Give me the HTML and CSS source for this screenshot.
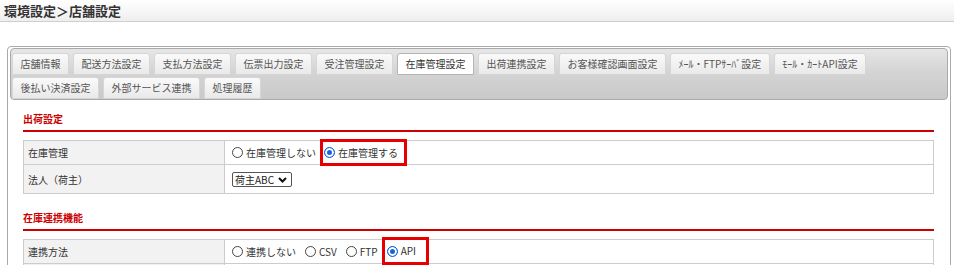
FILE: index.html
```html
<!DOCTYPE html>
<html lang="ja">
<head>
<meta charset="utf-8">
<title>店舗設定</title>
<link rel="stylesheet" href="styles.css">
</head>
<body>
<div class="titlebar"><h1>環境設定＞店舗設定</h1></div>
<div class="panel">
  <div class="tabs">
    <span class="tab">店舗情報</span>
    <span class="tab">配送方法設定</span>
    <span class="tab">支払方法設定</span>
    <span class="tab">伝票出力設定</span>
    <span class="tab">受注管理設定</span>
    <span class="tab active">在庫管理設定</span>
    <span class="tab">出荷連携設定</span>
    <span class="tab">お客様確認画面設定</span>
    <span class="tab">ﾒｰﾙ・FTPｻｰﾊﾞ設定</span>
    <span class="tab">ﾓｰﾙ・ｶｰﾄAPI設定</span>
    <span class="tab">後払い決済設定</span>
    <span class="tab">外部サービス連携</span>
    <span class="tab">処理履歴</span>
  </div>
  <div class="content">
    <h3 class="sec">出荷設定</h3>
    <table class="form">
      <tr class="row">
        <th>在庫管理</th>
        <td>
          <div class="opts">
            <label class="opt"><span class="radio"></span>在庫管理しない</label>
            <label class="opt hl"><span class="radio on"></span>在庫管理する</label>
          </div>
        </td>
      </tr>
      <tr class="row tall">
        <th>法人（荷主）</th>
        <td>
          <span class="sel">荷主ABC<svg class="chev" width="9" height="6" viewBox="0 0 9 6"><path d="M1 1 L4.5 4.5 L8 1" fill="none" stroke="#111" stroke-width="2"/></svg></span>
        </td>
      </tr>
    </table>

    <h3 class="sec sec2">在庫連携機能</h3>
    <table class="form">
      <tr class="row">
        <th>連携方法</th>
        <td>
          <div class="opts">
            <label class="opt"><span class="radio"></span>連携しない</label>
            <label class="opt"><span class="radio"></span>CSV</label>
            <label class="opt"><span class="radio"></span>FTP</label>
            <label class="opt hl hl2"><span class="radio on"></span>API</label>
          </div>
        </td>
      </tr>
      <tr class="row">
        <th>&nbsp;</th>
        <td>&nbsp;</td>
      </tr>
    </table>
  </div>
</div>
</body>
</html>
```

FILE: styles.css
```css
html, body {
  margin: 0;
  padding: 0;
  background: #fff;
}
body {
  font-family: "Noto Sans CJK JP", "Noto Sans", sans-serif;
  color: #333;
  overflow: hidden;
}
.titlebar {
  height: 21px;
  border-bottom: 1px solid #cfcfcf;
  background: linear-gradient(#ffffff, #eeeeee);
  padding-left: 4px;
}
.titlebar h1 {
  margin: 0;
  font-size: 13px;
  font-weight: bold;
  line-height: 21px;
  color: #333;
}
.panel {
  margin: 24px 3px 0 7px;
  border: 1px solid #aaa;
  border-radius: 4px;
  padding: 1px 2px 0;
  height: 260px;
}
.tabs {
  display: flex;
  flex-wrap: wrap;
  align-content: flex-start;
  row-gap: 2px;
  column-gap: 4px;
  border: 1px solid #aaa;
  border-radius: 4px;
  padding: 4px 2px 0 1px;
  background: linear-gradient(#e6e6e6, #d4d4d4 45%, #c9c9c9);
  box-sizing: border-box;
  height: 52px;
}
.tab {
  height: 22px;
  box-sizing: border-box;
  padding: 0 7.5px;
  font-size: 10px;
  line-height: 20px;
  color: #555;
  border: 1px solid #d6d6d6;
  border-radius: 3px 3px 0 0;
  background: linear-gradient(#fafafa, #e9e9e9);
  white-space: nowrap;
}
.tab.active {
  background: #fff;
  border-color: #b5b5b5;
  color: #333;
}
.content {
  margin: 0 14px 0 13px;
}
.sec {
  margin: 12px 0 0;
  font-size: 10px;
  line-height: 14px;
  font-weight: bold;
  color: #cc0000;
  padding-bottom: 4px;
  border-bottom: 2px solid #cc0000;
}
.sec2 {
  margin-top: 17px;
}
.form {
  width: 100%;
  margin-top: 8px;
  border-collapse: collapse;
  font-size: 10px;
}
.form th, .form td {
  border: 1px solid #ccc;
  padding: 0;
  height: 23px;
  vertical-align: middle;
}
.form th {
  width: 196px;
  background: #f2f2f2;
  font-weight: normal;
  text-align: left;
  padding-left: 4px;
  color: #333;
}
.form td {
  padding-left: 7px;
  color: #333;
}
.form .tall th, .form .tall td {
  height: 28px;
}
.opts {
  display: flex;
  align-items: center;
  height: 21px;
}
.opt {
  display: inline-flex;
  align-items: center;
  gap: 3px;
  margin-right: 9px;
  line-height: 14px;
}
.radio {
  width: 11px;
  height: 11px;
  box-sizing: border-box;
  border: 1px solid #444;
  border-radius: 50%;
  background: #fff;
}
.radio.on {
  border-color: #1565d8;
  background: #1565d8;
  box-shadow: inset 0 0 0 2px #fff;
}
.opt.hl {
  margin: -3px 0 -3px -5px;
  height: 21px;
  border: 3px solid #e60000;
  padding: 0 6px 0 1px;
}
.opt.hl2 {
  margin-top: -4px;
  padding: 0 10px 0 2px;
  height: 22px;
}
.sel {
  display: inline-flex;
  align-items: center;
  gap: 4px;
  height: 15px;
  box-sizing: border-box;
  border: 1px solid #555;
  border-radius: 2px;
  padding: 0 4px 0 2px;
  font-size: 10px;
  line-height: 13px;
  color: #222;
  vertical-align: middle;
}
.chev {
  display: block;
}
```
